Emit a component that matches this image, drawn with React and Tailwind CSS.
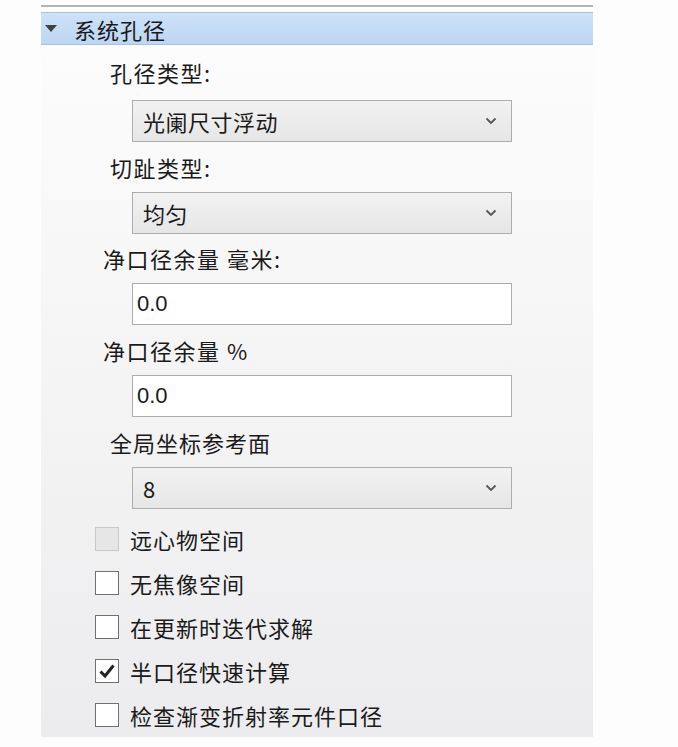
import React from "react";

const font = { fontFamily: '"Noto Sans CJK SC", "Noto Sans", sans-serif' };

function Chevron() {
  return (
    <svg width="12" height="8" viewBox="0 0 12 8" className="block">
      <path d="M1.5 1.5 L6 6 L10.5 1.5" fill="none" stroke="#555" strokeWidth="1.8" />
    </svg>
  );
}

function Select({ value }) {
  return (
    <div className="ml-[91px] mr-[81px] h-[42px] flex items-center justify-between border border-[#adadad] bg-gradient-to-b from-[#f2f2f2] to-[#e6e6e6] pl-[10px] pr-[14px]">
      <span className="text-[22px] tracking-[0.5px] text-[#1a1a1a] leading-none">{value}</span>
      <Chevron />
    </div>
  );
}

function Input({ value }) {
  return (
    <div className="ml-[91px] mr-[81px] h-[42px] flex items-center border border-[#acacac] bg-white pl-[4px]">
      <span className="text-[22px] text-[#1a1a1a] leading-none" style={{ fontFamily: '"Liberation Sans", sans-serif' }}>{value}</span>
    </div>
  );
}

function Check({ label, checked, disabled }) {
  return (
    <div className="flex items-center h-[44px] pl-[54px]">
      <div
        className={
          "w-[24px] h-[24px] border flex items-center justify-center " +
          (disabled ? "border-[#c8c8c8] bg-[#e6e6e6]" : "border-[#707070] bg-white")
        }
      >
        {checked && (
          <svg width="18" height="16" viewBox="0 0 18 16">
            <path d="M2.5 8.5 L7 13 L15.5 2.5" fill="none" stroke="#222" strokeWidth="3" />
          </svg>
        )}
      </div>
      <span className="ml-[11px] text-[22px] tracking-[1px] text-[#1a1a1a] leading-none">{label}</span>
    </div>
  );
}

export default function App() {
  return (
    <div className="w-[678px] h-[747px] bg-[#fdfdfd] relative" style={font}>
      <div className="pt-[5px] pl-[41px] w-[593px]">
        <div className="h-[2px] bg-[#b4b4b4]" />
        <div className="h-[5px] bg-white" />
        <div className="h-[33px] border-t border-b border-[#a9c1da] bg-gradient-to-b from-[#cde1f8] to-[#bdd6f3] flex items-center">
          <svg width="12" height="8" viewBox="0 0 12 8" className="ml-[4px]">
            <path d="M0 0 L12 0 L6 7 Z" fill="#404040" />
          </svg>
          <span className="ml-[17px] text-[22px] tracking-[1px] text-[#1a1a1a] leading-none">系统孔径</span>
        </div>
        <div className="h-[692px] bg-gradient-to-b from-[#fcfcfc] to-[#ececee] flex flex-col">
          <div className="pl-[69px] h-[55px] flex items-center text-[22px] tracking-[1.5px] text-[#1a1a1a]">孔径类型:</div>
          <Select value="光阑尺寸浮动" />
          <div className="pl-[69px] h-[50px] flex items-center text-[22px] tracking-[1.5px] text-[#1a1a1a]">切趾类型:</div>
          <Select value="均匀" />
          <div className="pl-[62px] h-[49px] flex items-center text-[22px] tracking-[1.5px] text-[#1a1a1a]">净口径余量 毫米:</div>
          <Input value="0.0" />
          <div className="pl-[62px] h-[50px] flex items-center text-[22px] tracking-[1.5px] text-[#1a1a1a]">净口径余量 %</div>
          <Input value="0.0" />
          <div className="pl-[69px] h-[50px] flex items-center text-[22px] tracking-[1px] text-[#1a1a1a]">全局坐标参考面</div>
          <Select value="8" />
          <div className="h-[8px]" />
          <Check label="远心物空间" disabled />
          <Check label="无焦像空间" />
          <Check label="在更新时迭代求解" />
          <Check label="半口径快速计算" checked />
          <Check label="检查渐变折射率元件口径" />
        </div>
      </div>
    </div>
  );
}
